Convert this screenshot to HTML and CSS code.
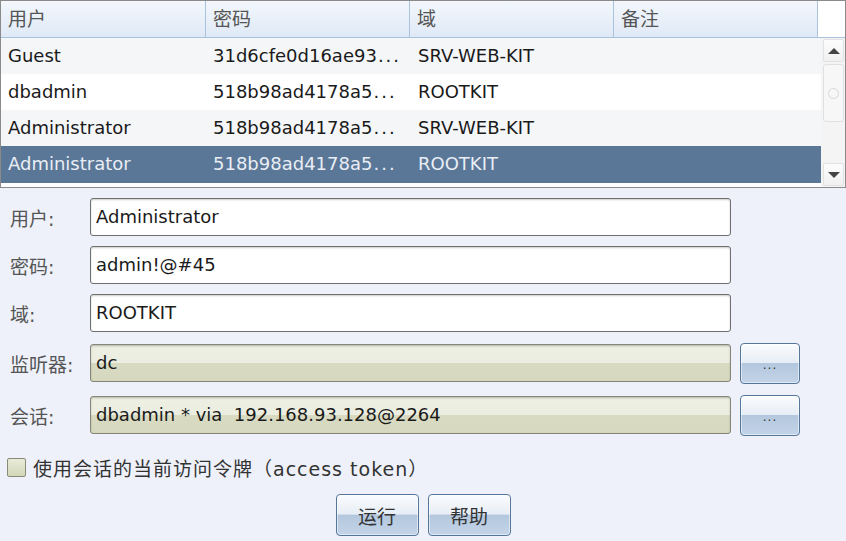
FILE: index.html
```html
<!DOCTYPE html>
<html lang="zh-CN">
<head>
  <meta charset="UTF-8">
  <title>凭据</title>
  <link rel="stylesheet" href="styles.css">
</head>
<body>
  <div class="table">
    <div class="thead">
      <div class="th">用户</div>
      <div class="th">密码</div>
      <div class="th">域</div>
      <div class="th">备注</div>
      <div class="th-corner"></div>
    </div>
    <div class="tbody">
      <div class="rows">
        <div class="tr odd">
          <div class="td">Guest</div>
          <div class="td">31d6cfe0d16ae93<span class="dots">...</span></div>
          <div class="td">SRV-WEB-KIT</div>
          <div class="td"></div>
        </div>
        <div class="tr">
          <div class="td">dbadmin</div>
          <div class="td">518b98ad4178a5<span class="dots">...</span></div>
          <div class="td">ROOTKIT</div>
          <div class="td"></div>
        </div>
        <div class="tr odd">
          <div class="td">Administrator</div>
          <div class="td">518b98ad4178a5<span class="dots">...</span></div>
          <div class="td">SRV-WEB-KIT</div>
          <div class="td"></div>
        </div>
        <div class="tr selected">
          <div class="td">Administrator</div>
          <div class="td">518b98ad4178a5<span class="dots">...</span></div>
          <div class="td">ROOTKIT</div>
          <div class="td"></div>
        </div>
      </div>
      <div class="scrollbar">
        <div class="sb-btn"><span class="arrow-up"></span></div>
        <div class="sb-track">
          <div class="sb-thumb"><span class="grip"></span></div>
        </div>
        <div class="sb-btn"><span class="arrow-down"></span></div>
      </div>
    </div>
  </div>

  <form class="form">
    <div class="row">
      <label class="label">用户:</label>
      <div class="field">Administrator</div>
    </div>
    <div class="row">
      <label class="label">密码:</label>
      <div class="field">admin!@#45</div>
    </div>
    <div class="row">
      <label class="label">域:</label>
      <div class="field">ROOTKIT</div>
    </div>
    <div class="row tall">
      <label class="label">监听器:</label>
      <div class="field readonly">dc</div>
      <button type="button" class="btn more">...</button>
    </div>
    <div class="row tall">
      <label class="label">会话:</label>
      <div class="field readonly">dbadmin * via&nbsp; 192.168.93.128@2264</div>
      <button type="button" class="btn more">...</button>
    </div>

    <div class="check">
      <span class="box"></span>
      <span class="check-text">使用会话的当前访问令牌（access token）</span>
    </div>

    <div class="actions">
      <button type="button" class="btn action">运行</button>
      <button type="button" class="btn action">帮助</button>
    </div>
  </form>
</body>
</html>
```

FILE: styles.css
```css
body {
  margin: 0;
  width: 846px;
  height: 541px;
  background: #eef1f9;
  font-family: "DejaVu Sans", "Noto Sans CJK SC", sans-serif;
  font-size: 18px;
  color: #1a1a1a;
  overflow: hidden;
}

/* credentials table */
.table {
  border: 1px solid #8a8a8a;
  height: 186px;
  background: #fff;
  overflow: hidden;
}
.thead { display: flex; height: 36px; border-bottom: 1px solid #a9c3df; }
.th {
  width: 204px;
  border-right: 1px solid #a9c3df;
  background: linear-gradient(#f3f7fc, #dfe9f6);
  color: #555;
  font-size: 19px;
  line-height: 36px;
  padding-left: 7px;
  box-sizing: border-box;
}
.th:first-child { width: 205px; }
.th-corner { flex: 1; background: #fff; }

.tbody { display: flex; height: 149px; }
.rows { width: 820px; }
.tr { display: flex; height: 36px; background: #fff; }
.tr.odd { background: #f5f6f8; }
.tr.selected { background: #5b7797; color: #e9eef5; height: 37px; }
.td {
  width: 205px;
  line-height: 36px;
  padding-left: 7px;
  box-sizing: border-box;
  white-space: nowrap;
  overflow: hidden;
}
.dots { letter-spacing: 2px; margin-left: 1px; }

.scrollbar {
  flex: 1;
  display: flex;
  flex-direction: column;
  background: #f4f4f4;
  padding: 1px 1px 1px 2px;
  gap: 2px;
}
.sb-btn {
  height: 21px;
  border: 1px solid #e2e2e2;
  border-radius: 2px;
  background: linear-gradient(#fdfdfd, #f0f0f0);
  display: flex;
  align-items: center;
  justify-content: center;
}
.arrow-up, .arrow-down { width: 0; height: 0; border-left: 6px solid transparent; border-right: 6px solid transparent; }
.arrow-up { border-bottom: 6px solid #444; }
.arrow-down { border-top: 6px solid #444; }
.sb-track { flex: 1; }
.sb-thumb {
  height: 56px;
  border: 1px solid #e0e0e0;
  border-radius: 3px;
  background: #f7f7f7;
  display: flex;
  align-items: center;
  justify-content: center;
}
.grip { width: 9px; height: 9px; border: 1px solid #d8d8d8; border-radius: 50%; }

/* edit form */
.form { padding: 10px 0 0 10px; }
.row { display: flex; align-items: center; height: 38px; margin-bottom: 10px; }
.row.tall { height: 42px; }
.label { width: 80px; color: #555; font-size: 19px; }
.field {
  width: 641px;
  height: 38px;
  box-sizing: border-box;
  border: 1px solid #6f6f6f;
  border-radius: 3px;
  background: #fff;
  box-shadow: inset 0 1px 2px rgba(0, 0, 0, 0.2);
  padding-left: 5px;
  line-height: 36px;
  white-space: nowrap;
}
.field.readonly {
  border-color: #85857a;
  background: linear-gradient(#e4e6d6 0, #ecefe2 3px, #eaeddf 50%, #d8dbc2 50%, #d6d9be 100%);
}

.btn {
  font-family: "DejaVu Sans", "Noto Sans CJK SC", sans-serif;
  border: 1px solid #56779b;
  border-radius: 4px;
  background: linear-gradient(#fbfcfe 0, #e6edf5 48%, #b3c7de 50%, #c3d4e8 100%);
  box-shadow: inset 0 0 0 1px rgba(255, 255, 255, 0.5);
  color: #333;
  padding: 0;
}
.more { width: 60px; height: 41px; margin-left: 9px; font-size: 12px; letter-spacing: 1px; padding-top: 4px; }

.check { display: flex; align-items: center; height: 22px; margin: 20px 0 0 -3px; }
.box {
  width: 17px;
  height: 17px;
  border: 1px solid #8a8a78;
  border-radius: 2px;
  background: linear-gradient(#e8ebd8, #d4d7ba);
  margin-right: 7px;
}
.check-text { font-size: 19px; letter-spacing: 1px; color: #333; }

.actions { display: flex; justify-content: center; gap: 9px; margin: 16px 0 0 -10px; }
.action { width: 83px; height: 42px; font-size: 19px; }
```
